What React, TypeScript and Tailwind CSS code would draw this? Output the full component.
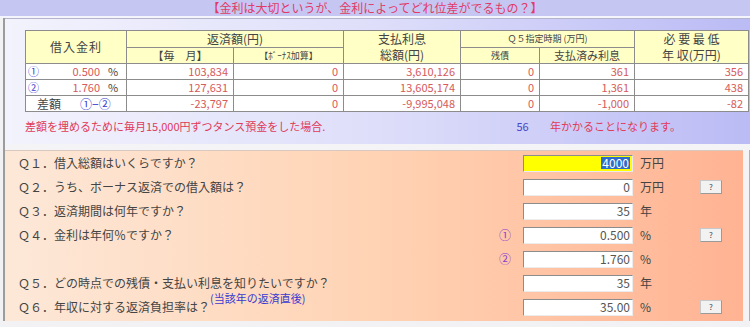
const font = "font-['Noto_Sans_CJK_JP','Noto_Sans',sans-serif]";

type DataRow = {
  key: string;
  label: React.ReactNode;
  monthly: string;
  bonus: string;
  interest: string;
  balance: string;
  paid: string;
  income: string;
};

const rows: DataRow[] = [
  {
    key: "1",
    label: (
      <div className="flex items-center">
        <span className="w-[38px] pl-[2px] text-[#3b3bd0]">①</span>
        <span className="w-[36px] text-right text-[#d65a5a]">0.500</span>
        <span className="ml-[8px] text-[#444]">%</span>
      </div>
    ),
    monthly: "103,834",
    bonus: "0",
    interest: "3,610,126",
    balance: "0",
    paid: "361",
    income: "356",
  },
  {
    key: "2",
    label: (
      <div className="flex items-center">
        <span className="w-[38px] pl-[2px] text-[#3b3bd0]">②</span>
        <span className="w-[36px] text-right text-[#d65a5a]">1.760</span>
        <span className="ml-[8px] text-[#444]">%</span>
      </div>
    ),
    monthly: "127,631",
    bonus: "0",
    interest: "13,605,174",
    balance: "0",
    paid: "1,361",
    income: "438",
  },
  {
    key: "diff",
    label: (
      <div className="flex items-center">
        <span className="w-[54px] pl-[11px] text-[12px] text-[#444]">差額</span>
        <span className="text-[12px] text-[#3b3bd0]">①−②</span>
      </div>
    ),
    monthly: "-23,797",
    bonus: "0",
    interest: "-9,995,048",
    balance: "0",
    paid: "-1,000",
    income: "-82",
  },
];

type Question = {
  label: string;
  marker?: string;
  value: string;
  unit: string;
  help?: boolean;
  active?: boolean;
  note?: string;
};

const questions: Question[] = [
  { label: "Ｑ１．借入総額はいくらですか？", value: "4000", unit: "万円", active: true },
  { label: "Ｑ２．うち、ボーナス返済での借入額は？", value: "0", unit: "万円", help: true },
  { label: "Ｑ３．返済期間は何年ですか？", value: "35", unit: "年" },
  { label: "Ｑ４．金利は年何％ですか？", marker: "①", value: "0.500", unit: "%", help: true },
  { label: "", marker: "②", value: "1.760", unit: "%" },
  { label: "Ｑ５．どの時点での残債・支払い利息を知りたいですか？", value: "35", unit: "年", note: "(当該年の返済直後)" },
  { label: "Ｑ６．年収に対する返済負担率は？", value: "35.00", unit: "%", help: true },
];

const th = "border border-[#8c8c8c] bg-[#ffffc6] font-normal text-[#444] p-0";
const td = "border border-[#8c8c8c] bg-white p-0 pr-[5px] text-right text-[#d65a5a]";

export default function App() {
  return (
    <div className={`${font} h-[327px] w-[750px] overflow-hidden bg-[#f2f2f4] text-[12px]`}>
      <div className="h-[16px] bg-[#c6c6f3] text-center text-[12px] leading-[16px] text-[#e03a68]">
        【金利は大切というが、金利によってどれ位差がでるもの？】
      </div>
      <div className="h-[2px] bg-[#f4f4fc]" />
      <div className="ml-[3px] border-l-[2px] border-[#9c9c9c]">
        <div className="h-[126px] border-t border-[#b4b4cc] bg-gradient-to-r from-[#f3f3fd] via-[#dedefa] to-[#bbbbf5] pl-[20px] pt-[11px]">
          <table className="w-[723px] table-fixed border-collapse text-[11px] leading-none">
            <colgroup>
              <col className="w-[101px]" />
              <col className="w-[107px]" />
              <col className="w-[110px]" />
              <col className="w-[117px]" />
              <col className="w-[79px]" />
              <col className="w-[95px]" />
              <col className="w-[114px]" />
            </colgroup>
            <thead>
              <tr className="h-[16px]">
                <th rowSpan={2} className={`${th} text-[12px] tracking-[1px]`}>
                  借入金利
                </th>
                <th colSpan={2} className={`${th} text-[12px]`}>
                  返済額(円)
                </th>
                <th rowSpan={2} className={`${th} text-[12px] leading-[16px]`}>
                  支払利息
                  <br />
                  総額(円)
                </th>
                <th colSpan={2} className={`${th} text-[9px]`}>
                  Ｑ５指定時期 (万円)
                </th>
                <th rowSpan={2} className={`${th} text-[12px] leading-[16px]`}>
                  必 要 最 低
                  <br />
                  年 収(万円)
                </th>
              </tr>
              <tr className="h-[16px]">
                <th className={`${th} text-[11px] text-[#3b3bd0]`}>【毎　月】</th>
                <th className={`${th} text-[9px] text-[#3b3bd0]`}>【ﾎﾞｰﾅｽ加算】</th>
                <th className={`${th} text-[9px]`}>残債</th>
                <th className={`${th} text-[11px]`}>支払済み利息</th>
              </tr>
            </thead>
            <tbody>
              {rows.map((row) => (
                <tr key={row.key} className="h-[16px]">
                  <td className="border border-[#8c8c8c] bg-white p-0">{row.label}</td>
                  <td className={td}>{row.monthly}</td>
                  <td className={td}>{row.bonus}</td>
                  <td className={td}>{row.interest}</td>
                  <td className={td}>{row.balance}</td>
                  <td className={td}>{row.paid}</td>
                  <td className={td}>{row.income}</td>
                </tr>
              ))}
            </tbody>
          </table>
          <div className="mt-[7px] flex h-[14px] items-center text-[11px] leading-none">
            <span className="w-[470px] text-[#e03a58]">差額を埋めるために毎月15,000円ずつタンス預金をした場合.</span>
            <span className="w-[55px] text-center text-[#4646c8]">56</span>
            <span className="text-[#e03a58]">年かかることになります。</span>
          </div>
        </div>
        <div className="h-[6px] bg-[#f4f4f6]" />
        <div className="flex">
          <div className="h-[171px] w-[738px] border-t border-[#d8c8c0] bg-gradient-to-r from-[#fde8d8] via-[#ffd3b4] to-[#ffb393]">
            {questions.map((q, i) => (
              <div key={i} className="flex h-[24px] items-center text-[#444]">
                <div className="relative w-[491px] pl-[13px] leading-none">
                  {q.label}
                  {q.note && (
                    <span className="absolute left-[205px] top-[16px] text-[11px] leading-none text-[#3b3bd0]">
                      {q.note}
                    </span>
                  )}
                </div>
                <div className="w-[27px] pl-[3px] text-[#8a3fd0]">{q.marker}</div>
                <div
                  className={`flex h-[17px] w-[110px] items-center justify-end border border-t-[#8c8c8c] border-l-[#8c8c8c] border-r-[#ececec] border-b-[#ececec] pr-[2px] text-[12px] leading-none ${
                    q.active ? "bg-[#ffff00]" : "bg-white"
                  }`}
                >
                  {q.active ? (
                    <span className="bg-[#2f6cc8] px-[1px] text-white">{q.value}</span>
                  ) : (
                    <span className="text-[#555]">{q.value}</span>
                  )}
                </div>
                <div className="w-[60px] pl-[7px]">{q.unit}</div>
                {q.help && (
                  <div className="ml-[7px] flex h-[14px] w-[22px] items-center justify-center border border-[#c8c8c8] border-b-[#9a9a9a] border-r-[#9a9a9a] bg-[#f2f2f2] text-[8px] leading-none text-[#444]">
                    ?
                  </div>
                )}
              </div>
            ))}
          </div>
          <div className="h-[171px] flex-1 border-r border-[#b0b0b0] bg-[#f4f4f6]" />
        </div>
      </div>
    </div>
  );
}
